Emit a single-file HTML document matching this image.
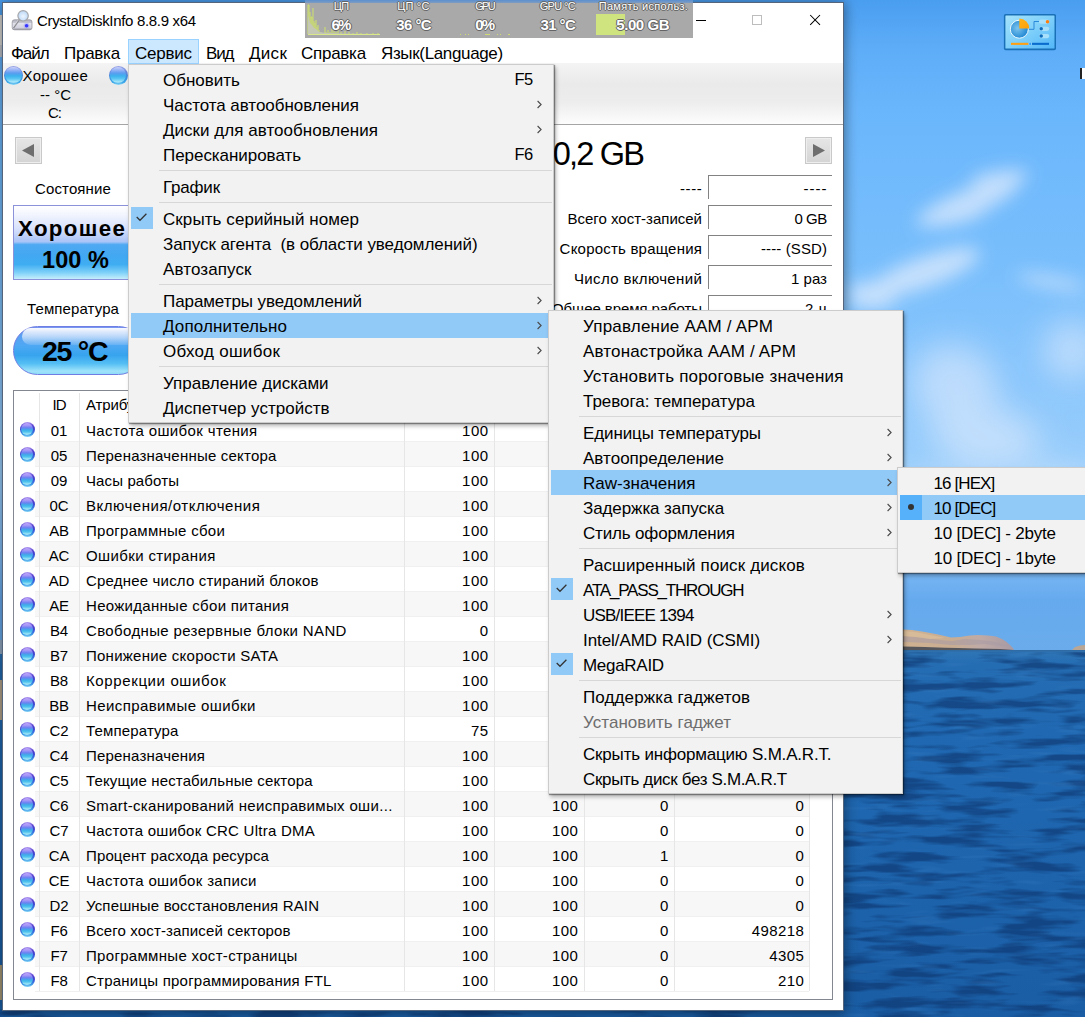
<!DOCTYPE html>
<html lang="ru">
<head>
<meta charset="utf-8">
<title>CrystalDiskInfo 8.8.9 x64</title>
<style>
*{box-sizing:border-box;margin:0;padding:0}
html,body{width:1085px;height:1017px;overflow:hidden;background:#1b5ba5}
body{font-family:"Liberation Sans",sans-serif;font-size:15px;color:#000;position:relative}
.a{position:absolute}
.t{position:absolute;white-space:pre}
#sky{left:0;top:0;width:1085px;height:651px;background:linear-gradient(180deg,#4a9ef0 0px,#5eadf8 50px,#6ab6fc 110px,#78befc 260px,#8ac6fc 380px,#9acefb 470px,#7fbbf6 560px,#66aaee 600px,#6aaceb 651px)}
#sea{left:0;top:650px;width:1085px;height:367px;background:linear-gradient(180deg,#3076b6 0px,#256db3 14px,#2069b2 80px,#1d64ad 220px,#1a5da4 367px)}
#win{left:2px;top:2px;width:842px;height:1009px;background:#fff;border:1px solid #55667c;box-shadow:0 1px 12px 1px rgba(0,0,0,.42)}
#diskbar{left:3px;top:63px;width:840px;height:62px;background:linear-gradient(180deg,#f4f4f4 0,#eaeaea 35%,#ededed 65%,#fdfdfd 100%);border-bottom:1px solid #a5a5a5}
#svc{left:128px;top:39px;width:71px;height:25px;background:#cce8ff;border:1px solid #99d1ff}
.orb{position:absolute;border-radius:50%}
.orbL{background:linear-gradient(180deg,#9aa4e6 0,#6a86d8 30%,#3f8fe0 60%,#3aa6e8 85%,#8ad6f6 100%)}
.orbL::after{content:'';position:absolute;left:1.2px;top:1.2px;right:1.2px;bottom:1.2px;border-radius:50%;background:linear-gradient(180deg,#ccd2fa 0,#9ab4f6 18%,#5c9cf0 38%,#3cb2ee 56%,#5cc6f2 74%,#a4e4f9 92%,#8fd8f6 100%)}
.orbS{background:linear-gradient(180deg,#b49af0 0,#5a44d0 22%,#4340cc 42%,#3c62dc 62%,#3a98e6 82%,#86d4f6 100%)}
.orbS::after{content:'';position:absolute;left:1.3px;top:1.3px;right:1.3px;bottom:1.3px;border-radius:50%;background:linear-gradient(180deg,#c0a8fa 0,#a596f7 20%,#6a82f2 40%,#3eaeea 58%,#50c4ee 74%,#a6e8f8 93%,#8edcf6 100%)}
.nav{position:absolute;width:27px;height:27px;background:linear-gradient(180deg,#e6e6e6,#d4d4d4);border:1px solid #c9c9c9;box-shadow:inset 0 0 0 1px #eee}
.fld{position:absolute;left:708px;width:124px;height:24px;border-top:1px solid #828282;border-left:1px solid #828282;background:#fff}
/* menus */
.menu{position:absolute;background:#f2f2f2;border:1px solid #ccc;box-shadow:1px 1px 1px rgba(0,0,0,.38),2px 3px 4px rgba(0,0,0,.28)}
.hl{position:absolute;background:#91c9f7;height:25px}
.sep{position:absolute;height:1px;background:#d7d7d7}
.chk{position:absolute;width:22px;height:25px;background:#56b0fa}
</style>
</head>
<body>
<div id="sky" class="a"></div>
<div id="sea" class="a"></div>
<svg class="a" style="left:0;top:0" width="1085" height="1017" viewBox="0 0 1085 1017">
<defs>
<filter id="bl" x="-30%" y="-60%" width="160%" height="220%"><feGaussianBlur stdDeviation="9"/></filter>
<filter id="bl2" x="-30%" y="-60%" width="160%" height="220%"><feGaussianBlur stdDeviation="16"/></filter>
<filter id="wv" x="0" y="0" width="100%" height="100%" color-interpolation-filters="sRGB"><feTurbulence type="fractalNoise" baseFrequency="0.016 0.11" numOctaves="3" seed="7" result="n"/><feColorMatrix in="n" type="matrix" values="0 0 0 0 0.05  0 0 0 0 0.2  0 0 0 0 0.42  0 0 0 -4 2.2"/></filter>
<filter id="wv2" x="0" y="0" width="100%" height="100%" color-interpolation-filters="sRGB"><feTurbulence type="fractalNoise" baseFrequency="0.02 0.16" numOctaves="2" seed="3" result="n"/><feColorMatrix in="n" type="matrix" values="0 0 0 0 0.35  0 0 0 0 0.6  0 0 0 0 0.85  0 0 0 2.6 -1.55"/></filter>
<linearGradient id="isl" x1="0" y1="0" x2="1" y2="0"><stop offset="0" stop-color="#d0b290"/><stop offset=".45" stop-color="#c9ad92"/><stop offset=".7" stop-color="#bfaaa6"/><stop offset="1" stop-color="#a79aa4"/></linearGradient>
</defs>
<g filter="url(#bl)" fill="#e8effd" opacity=".7">
<ellipse cx="968" cy="203" rx="55" ry="13" transform="rotate(-22 968 203)"/>
<ellipse cx="1000" cy="178" rx="30" ry="7" transform="rotate(-8 1000 178)"/>
<ellipse cx="925" cy="272" rx="58" ry="15" transform="rotate(-20 925 272)"/>
<ellipse cx="872" cy="298" rx="24" ry="11"/>
<ellipse cx="1052" cy="282" rx="36" ry="5" transform="rotate(10 1052 282)"/>
<ellipse cx="960" cy="215" rx="28" ry="8" transform="rotate(-15 960 215)"/>
<ellipse cx="870" cy="292" rx="22" ry="10"/>
</g>
<g filter="url(#bl2)" fill="#e6eefd" opacity=".55">
<ellipse cx="955" cy="385" rx="45" ry="40" transform="rotate(35 955 385)"/>
<ellipse cx="990" cy="440" rx="50" ry="30"/>
<ellipse cx="963" cy="428" rx="32" ry="28"/>
<ellipse cx="1072" cy="350" rx="30" ry="30"/>
<ellipse cx="930" cy="510" rx="70" ry="30"/>
<ellipse cx="1060" cy="500" rx="50" ry="30"/>
</g>
<rect x="843" y="652" width="242" height="365" filter="url(#wv)" opacity=".6"/>
<rect x="843" y="652" width="242" height="365" filter="url(#wv2)" opacity=".22"/>
<rect x="0" y="1009" width="845" height="8" filter="url(#wv)" opacity=".6"/>
<path d="M903 650 L903 629.5 L912 630 L925 632 L938 634.5 L951 637.5 L960 637 L970 635.5 L978 635 L988 635.5 L996 636.5 L1002 639 L1006 641.5 L1010 645 L1013 648 L1014 650 Z" fill="url(#isl)"/>
<path d="M903 636 L920 637 L940 640 L952 641 L965 639 L980 640 L990 641 L1000 643 L1008 646 L1000 646 L985 644 L970 645 L950 645 L930 643 L903 642 Z" fill="#a89aa6" opacity=".55"/>
<path d="M903 631 L915 632 L930 635 L945 638 L930 639 L915 637 L903 636 Z" fill="#dcc09c" opacity=".7"/>
<path d="M903 650 L903 646.5 L925 647 L945 647.8 L958 648 L975 648.6 L1000 649 L1014 650 Z" fill="#3f4652" opacity=".85"/>
<path d="M1072 650 L1075 647 L1080 645.5 L1085 645 L1085 650 Z" fill="#b9a694"/>
<rect x="843" y="650" width="242" height="1.5" fill="#2d5f92" opacity=".5"/>
</svg><div class="a" style="left:0;top:640px;width:3px;height:14px;background:#93aac2"></div><div class="a" style="left:0;top:680px;width:3px;height:40px;background:#b5a58c"></div><div class="a" style="left:0;top:965px;width:3px;height:35px;background:#a89a78"></div><div class="a" style="left:0;top:15px;width:3px;height:30px;background:#d8d6d2"></div><div class="a" style="left:0;top:45px;width:3px;height:12px;background:#bfc3c8"></div><svg class="a" style="left:1003px;top:13px" width="54" height="38" viewBox="0 0 54 38">
<defs><linearGradient id="cpg" x1="0" y1="0" x2="1" y2="1"><stop offset="0" stop-color="#a4e2fb"/><stop offset=".5" stop-color="#7fd0fa"/><stop offset="1" stop-color="#52b6f8"/></linearGradient>
<radialGradient id="cpp" cx=".4" cy=".45" r=".6"><stop offset="0" stop-color="#7cc4ee"/><stop offset="1" stop-color="#1f86d2"/></radialGradient>
<linearGradient id="cpo" x1="0" y1="0" x2="1" y2="1"><stop offset="0" stop-color="#ffb31a"/><stop offset="1" stop-color="#ff9f0a"/></linearGradient></defs>
<rect x=".9" y=".9" width="52.1" height="36.4" rx="1.8" fill="#1a70b6"/>
<rect x="2.4" y="2.4" width="49.1" height="33.2" rx=".6" fill="url(#cpg)"/>
<circle cx="16.3" cy="16.2" r="9" fill="url(#cpp)" stroke="#eefaff" stroke-width="1"/>
<path d="M16.3 15.6 L16.3 5.6 A10 10 0 0 1 26.3 15.6 Z" fill="url(#cpo)"/>
<path d="M26 16.3 H31 V8.5 H36" fill="none" stroke="#2a88d8" stroke-width="1"/>
<rect x="35.9" y="6.6" width="10.4" height="4.2" rx="2.1" fill="#a8e0fb"/><circle cx="44.5" cy="8.7" r="1.75" fill="#ff7e0c"/>
<rect x="35.9" y="13.7" width="10.4" height="4.2" rx="2.1" fill="#a8e0fb"/><circle cx="38.2" cy="15.8" r="1.75" fill="#0f6cbd"/>
<rect x="35.9" y="20.9" width="10.4" height="4.3" rx="2.1" fill="#a8e0fb"/><circle cx="38.2" cy="23" r="1.75" fill="#0f6cbd"/>
<rect x="8" y="29.8" width="17.6" height="2.1" fill="#ffa012"/><rect x="29" y="29.8" width="17" height="2.1" fill="#0a6ccc"/><rect x="25.9" y="29.3" width="2.6" height="3.1" rx=".8" fill="#2f9cf5" stroke="#bfe6fb" stroke-width=".5"/>
</svg><div class="a" style="left:1080px;top:68px;width:2px;height:11px;background:#222"></div><div class="a" style="left:1082px;top:68px;width:3px;height:11px;background:#fff"></div>
<div id="win" class="a"></div>
<div id="diskbar" class="a"></div>
<div id="svc" class="a"></div>
<svg class="a" style="left:10px;top:8px" width="24" height="24" viewBox="0 0 24 24">
<defs><linearGradient id="dg" x1="0" y1="0" x2="0" y2="1"><stop offset="0" stop-color="#b4b4be"/><stop offset=".3" stop-color="#c6c6d0"/><stop offset=".36" stop-color="#e2e2ec"/><stop offset=".8" stop-color="#d2d2de"/><stop offset="1" stop-color="#85858f"/></linearGradient>
<radialGradient id="mg" cx=".5" cy=".55" r=".6"><stop offset="0" stop-color="#edf5fe"/><stop offset="1" stop-color="#b5d4f6"/></radialGradient></defs>
<rect x="2.2" y="11.8" width="19.8" height="10" rx="2.2" fill="url(#dg)" stroke="#8e8e98" stroke-width=".7"/>
<circle cx="16.6" cy="17.8" r="3" fill="#8d8dff" opacity=".35"/><circle cx="16.6" cy="17.8" r="1.8" fill="#3737ff"/>
<path d="M8.6 12.6 L3.9 19.2" stroke="#8f8f96" stroke-width="1.7" stroke-linecap="round"/>
<path d="M7.9 12.4 L3.4 18.6" stroke="#f2f2f6" stroke-width=".7" stroke-linecap="round"/>
<circle cx="13.1" cy="7.8" r="5.2" fill="url(#mg)" stroke="#a6a6aa" stroke-width="1.2"/>
</svg><svg class="a" style="left:690px;top:8px" width="140" height="26" viewBox="0 0 140 26">
<path d="M6 12.5 H16" stroke="#000" stroke-width="1"/>
<rect x="62.5" y="7.5" width="9" height="9" fill="none" stroke="#bdbdbd" stroke-width="1"/>
<path d="M120.2 7 L130 16.8 M130 7 L120.2 16.8" stroke="#000" stroke-width="1.05"/>
</svg><div class="orb orbL" style="left:4px;top:65.5px;width:19px;height:19px"></div><div class="orb orbL" style="left:108.5px;top:65.5px;width:19px;height:19px"></div><div class="nav" style="left:15px;top:137px"></div><svg class="a" style="left:15px;top:137px" width="27" height="27"><path d="M19 7 L19 20 L7 13.5 Z" fill="#6e6e6e"/></svg><div class="nav" style="left:805px;top:137px"></div><svg class="a" style="left:805px;top:137px" width="27" height="27"><path d="M8 7 L8 20 L20 13.5 Z" fill="#6e6e6e"/></svg><div class="a" style="left:13px;top:205px;width:130px;height:75px;border:1px solid #8c92da;background:linear-gradient(180deg,#ffffff 0,#f2f5fe 12%,#d6e0fb 32%,#a9c4f7 49%,#4ea9f2 53%,#42a8f1 68%,#3fadf2 80%,#7dd0f8 91%,#c6eefc 100%)"></div><div class="a" style="left:13px;top:326px;width:130px;height:49px;border-radius:25px;border:1.5px solid #6f7ee2;background:linear-gradient(180deg,#7a96f2 0,#5f9df2 10%,#4ea8f3 40%,#37a3ee 60%,#55bff4 78%,#9fe3fa 94%,#8fdcf8 100%)"></div><div class="a" style="left:22px;top:328px;width:121px;height:17px;border-radius:12px 0 0 12px;background:linear-gradient(180deg,rgba(255,255,255,.95) 0,rgba(255,255,255,.55) 55%,rgba(255,255,255,.12) 100%)"></div><div class="fld" style="top:175px"></div><div class="fld" style="top:205px"></div><div class="fld" style="top:235px"></div><div class="fld" style="top:265px"></div><div class="fld" style="top:295px"></div>
<div class="t" style="top:11.0px;height:19px;line-height:19px;font-size:15px;left:37.0px;letter-spacing:-0.32px;">CrystalDiskInfo 8.8.9 x64</div>
<div class="t" style="top:43.0px;height:21px;line-height:21px;font-size:17px;left:11.0px;letter-spacing:-1.08px;">Файл</div>
<div class="t" style="top:43.0px;height:21px;line-height:21px;font-size:17px;left:64.0px;letter-spacing:-0.26px;">Правка</div>
<div class="t" style="top:43.0px;height:21px;line-height:21px;font-size:17px;left:135.0px;letter-spacing:-0.22px;">Сервис</div>
<div class="t" style="top:43.0px;height:21px;line-height:21px;font-size:17px;left:206.0px;letter-spacing:-1.11px;">Вид</div>
<div class="t" style="top:43.0px;height:21px;line-height:21px;font-size:17px;left:249.0px;letter-spacing:0.30px;">Диск</div>
<div class="t" style="top:43.0px;height:21px;line-height:21px;font-size:17px;left:301.0px;letter-spacing:-0.26px;">Справка</div>
<div class="t" style="top:43.0px;height:21px;line-height:21px;font-size:17px;left:381.0px;letter-spacing:-0.35px;">Язык(Language)</div>
<div class="t" style="top:66.0px;height:19px;line-height:19px;font-size:15px;left:22.5px;letter-spacing:0.29px;">Хорошее</div>
<div class="t" style="top:85.0px;height:19px;line-height:19px;font-size:15px;left:40.0px;">-- °C</div>
<div class="t" style="top:103.0px;height:19px;line-height:19px;font-size:15px;left:48.0px;letter-spacing:-1.00px;">C:</div>
<div class="t" style="top:179.0px;height:19px;line-height:19px;font-size:15px;left:35.0px;letter-spacing:0.13px;">Состояние</div>
<div class="t" style="top:215.0px;height:28px;line-height:28px;font-size:22.3px;left:18.0px;letter-spacing:1.33px;font-weight:bold;">Хорошее</div>
<div class="t" style="top:246.0px;height:29px;line-height:29px;font-size:23.5px;left:42.0px;letter-spacing:0.08px;font-weight:bold;">100 %</div>
<div class="t" style="top:299.0px;height:19px;line-height:19px;font-size:15px;left:27.0px;letter-spacing:0.11px;">Температура</div>
<div class="t" style="top:333.0px;height:36px;line-height:36px;font-size:28.5px;left:42.0px;letter-spacing:-1.25px;font-weight:bold;">25 °C</div>
<div class="t" style="top:134.0px;height:41px;line-height:41px;font-size:32.5px;left:552.7px;letter-spacing:-1.79px;">0,2 GB</div>
<div class="t" style="top:179.0px;height:19px;line-height:19px;font-size:15px;left:680.0px;letter-spacing:0.58px;">----</div>
<div class="t" style="top:179.0px;height:19px;line-height:19px;font-size:15px;left:803.6px;letter-spacing:0.98px;">----</div>
<div class="t" style="top:209.0px;height:19px;line-height:19px;font-size:15px;left:567.5px;">Всего хост-записей</div>
<div class="t" style="top:209.0px;height:19px;line-height:19px;font-size:15px;left:794.4px;letter-spacing:-0.45px;">0 GB</div>
<div class="t" style="top:239.0px;height:19px;line-height:19px;font-size:15px;left:559.6px;letter-spacing:0.21px;">Скорость вращения</div>
<div class="t" style="top:239.0px;height:19px;line-height:19px;font-size:15px;left:761.0px;letter-spacing:0.11px;">---- (SSD)</div>
<div class="t" style="top:269.0px;height:19px;line-height:19px;font-size:15px;left:574.0px;letter-spacing:0.35px;">Число включений</div>
<div class="t" style="top:269.0px;height:19px;line-height:19px;font-size:15px;left:791.0px;letter-spacing:0.02px;">1 раз</div>
<div class="t" style="top:299.0px;height:19px;line-height:19px;font-size:15px;left:552.0px;letter-spacing:-0.08px;">Общее время работы</div>
<div class="t" style="top:299.0px;height:19px;line-height:19px;font-size:15px;left:805.0px;letter-spacing:0.67px;">2 ч</div>
<div class="a" style="left:13px;top:390px;width:820px;height:610px;border:1px solid #828790;background:#fff"></div><div class="a" style="left:35px;top:441px;width:774px;height:1px;background:#f0f0f0"></div><div class="orb orbS" style="left:19.5px;top:421.5px;width:15px;height:15px"></div><div class="a" style="left:35px;top:442px;width:774px;height:25px;background:#f7f7f7"></div><div class="a" style="left:35px;top:466px;width:774px;height:1px;background:#f0f0f0"></div><div class="orb orbS" style="left:19.5px;top:446.5px;width:15px;height:15px"></div><div class="a" style="left:35px;top:491px;width:774px;height:1px;background:#f0f0f0"></div><div class="orb orbS" style="left:19.5px;top:471.5px;width:15px;height:15px"></div><div class="a" style="left:35px;top:492px;width:774px;height:25px;background:#f7f7f7"></div><div class="a" style="left:35px;top:516px;width:774px;height:1px;background:#f0f0f0"></div><div class="orb orbS" style="left:19.5px;top:496.5px;width:15px;height:15px"></div><div class="a" style="left:35px;top:541px;width:774px;height:1px;background:#f0f0f0"></div><div class="orb orbS" style="left:19.5px;top:521.5px;width:15px;height:15px"></div><div class="a" style="left:35px;top:542px;width:774px;height:25px;background:#f7f7f7"></div><div class="a" style="left:35px;top:566px;width:774px;height:1px;background:#f0f0f0"></div><div class="orb orbS" style="left:19.5px;top:546.5px;width:15px;height:15px"></div><div class="a" style="left:35px;top:591px;width:774px;height:1px;background:#f0f0f0"></div><div class="orb orbS" style="left:19.5px;top:571.5px;width:15px;height:15px"></div><div class="a" style="left:35px;top:592px;width:774px;height:25px;background:#f7f7f7"></div><div class="a" style="left:35px;top:616px;width:774px;height:1px;background:#f0f0f0"></div><div class="orb orbS" style="left:19.5px;top:596.5px;width:15px;height:15px"></div><div class="a" style="left:35px;top:641px;width:774px;height:1px;background:#f0f0f0"></div><div class="orb orbS" style="left:19.5px;top:621.5px;width:15px;height:15px"></div><div class="a" style="left:35px;top:642px;width:774px;height:25px;background:#f7f7f7"></div><div class="a" style="left:35px;top:666px;width:774px;height:1px;background:#f0f0f0"></div><div class="orb orbS" style="left:19.5px;top:646.5px;width:15px;height:15px"></div><div class="a" style="left:35px;top:691px;width:774px;height:1px;background:#f0f0f0"></div><div class="orb orbS" style="left:19.5px;top:671.5px;width:15px;height:15px"></div><div class="a" style="left:35px;top:692px;width:774px;height:25px;background:#f7f7f7"></div><div class="a" style="left:35px;top:716px;width:774px;height:1px;background:#f0f0f0"></div><div class="orb orbS" style="left:19.5px;top:696.5px;width:15px;height:15px"></div><div class="a" style="left:35px;top:741px;width:774px;height:1px;background:#f0f0f0"></div><div class="orb orbS" style="left:19.5px;top:721.5px;width:15px;height:15px"></div><div class="a" style="left:35px;top:742px;width:774px;height:25px;background:#f7f7f7"></div><div class="a" style="left:35px;top:766px;width:774px;height:1px;background:#f0f0f0"></div><div class="orb orbS" style="left:19.5px;top:746.5px;width:15px;height:15px"></div><div class="a" style="left:35px;top:791px;width:774px;height:1px;background:#f0f0f0"></div><div class="orb orbS" style="left:19.5px;top:771.5px;width:15px;height:15px"></div><div class="a" style="left:35px;top:792px;width:774px;height:25px;background:#f7f7f7"></div><div class="a" style="left:35px;top:816px;width:774px;height:1px;background:#f0f0f0"></div><div class="orb orbS" style="left:19.5px;top:796.5px;width:15px;height:15px"></div><div class="a" style="left:35px;top:841px;width:774px;height:1px;background:#f0f0f0"></div><div class="orb orbS" style="left:19.5px;top:821.5px;width:15px;height:15px"></div><div class="a" style="left:35px;top:842px;width:774px;height:25px;background:#f7f7f7"></div><div class="a" style="left:35px;top:866px;width:774px;height:1px;background:#f0f0f0"></div><div class="orb orbS" style="left:19.5px;top:846.5px;width:15px;height:15px"></div><div class="a" style="left:35px;top:891px;width:774px;height:1px;background:#f0f0f0"></div><div class="orb orbS" style="left:19.5px;top:871.5px;width:15px;height:15px"></div><div class="a" style="left:35px;top:892px;width:774px;height:25px;background:#f7f7f7"></div><div class="a" style="left:35px;top:916px;width:774px;height:1px;background:#f0f0f0"></div><div class="orb orbS" style="left:19.5px;top:896.5px;width:15px;height:15px"></div><div class="a" style="left:35px;top:941px;width:774px;height:1px;background:#f0f0f0"></div><div class="orb orbS" style="left:19.5px;top:921.5px;width:15px;height:15px"></div><div class="a" style="left:35px;top:942px;width:774px;height:25px;background:#f7f7f7"></div><div class="a" style="left:35px;top:966px;width:774px;height:1px;background:#f0f0f0"></div><div class="orb orbS" style="left:19.5px;top:946.5px;width:15px;height:15px"></div><div class="a" style="left:35px;top:991px;width:774px;height:1px;background:#f0f0f0"></div><div class="orb orbS" style="left:19.5px;top:971.5px;width:15px;height:15px"></div><div class="a" style="left:39px;top:393px;width:1px;height:598px;background:#e6e6e6"></div><div class="a" style="left:79px;top:393px;width:1px;height:598px;background:#e6e6e6"></div><div class="a" style="left:404px;top:393px;width:1px;height:598px;background:#e6e6e6"></div><div class="a" style="left:494px;top:393px;width:1px;height:598px;background:#e6e6e6"></div><div class="a" style="left:584px;top:393px;width:1px;height:598px;background:#e6e6e6"></div><div class="a" style="left:674px;top:393px;width:1px;height:598px;background:#e6e6e6"></div><div class="a" style="left:809px;top:393px;width:1px;height:598px;background:#e6e6e6"></div>
<div class="t" style="top:395.0px;height:19px;line-height:19px;font-size:15px;left:52.5px;letter-spacing:-1.00px;">ID</div>
<div class="t" style="top:395.0px;height:19px;line-height:19px;font-size:15px;left:86.0px;letter-spacing:-0.14px;">Атрибут</div>
<div class="t" style="top:421.0px;height:19px;line-height:19px;font-size:15px;letter-spacing:-0.20px;left:39px;width:40px;text-align:center;">01</div>
<div class="t" style="top:421.0px;height:19px;line-height:19px;font-size:15px;left:86.0px;letter-spacing:0.37px;">Частота ошибок чтения</div>
<div class="t" style="top:421.0px;height:19px;line-height:19px;font-size:15px;right:596.5px;letter-spacing:0.45px;">100</div>
<div class="t" style="top:446.0px;height:19px;line-height:19px;font-size:15px;letter-spacing:-0.20px;left:39px;width:40px;text-align:center;">05</div>
<div class="t" style="top:446.0px;height:19px;line-height:19px;font-size:15px;left:86.0px;letter-spacing:0.21px;">Переназначенные сектора</div>
<div class="t" style="top:446.0px;height:19px;line-height:19px;font-size:15px;right:596.5px;letter-spacing:0.45px;">100</div>
<div class="t" style="top:471.0px;height:19px;line-height:19px;font-size:15px;letter-spacing:-0.20px;left:39px;width:40px;text-align:center;">09</div>
<div class="t" style="top:471.0px;height:19px;line-height:19px;font-size:15px;left:86.0px;letter-spacing:0.12px;">Часы работы</div>
<div class="t" style="top:471.0px;height:19px;line-height:19px;font-size:15px;right:596.5px;letter-spacing:0.45px;">100</div>
<div class="t" style="top:496.0px;height:19px;line-height:19px;font-size:15px;letter-spacing:-0.20px;left:39px;width:40px;text-align:center;">0C</div>
<div class="t" style="top:496.0px;height:19px;line-height:19px;font-size:15px;left:86.0px;letter-spacing:0.53px;">Включения/отключения</div>
<div class="t" style="top:496.0px;height:19px;line-height:19px;font-size:15px;right:596.5px;letter-spacing:0.45px;">100</div>
<div class="t" style="top:521.0px;height:19px;line-height:19px;font-size:15px;letter-spacing:-0.20px;left:39px;width:40px;text-align:center;">AB</div>
<div class="t" style="top:521.0px;height:19px;line-height:19px;font-size:15px;left:86.0px;letter-spacing:0.28px;">Программные сбои</div>
<div class="t" style="top:521.0px;height:19px;line-height:19px;font-size:15px;right:596.5px;letter-spacing:0.45px;">100</div>
<div class="t" style="top:546.0px;height:19px;line-height:19px;font-size:15px;letter-spacing:-0.20px;left:39px;width:40px;text-align:center;">AC</div>
<div class="t" style="top:546.0px;height:19px;line-height:19px;font-size:15px;left:86.0px;letter-spacing:0.38px;">Ошибки стирания</div>
<div class="t" style="top:546.0px;height:19px;line-height:19px;font-size:15px;right:596.5px;letter-spacing:0.45px;">100</div>
<div class="t" style="top:571.0px;height:19px;line-height:19px;font-size:15px;letter-spacing:-0.20px;left:39px;width:40px;text-align:center;">AD</div>
<div class="t" style="top:571.0px;height:19px;line-height:19px;font-size:15px;left:86.0px;letter-spacing:0.19px;">Среднее число стираний блоков</div>
<div class="t" style="top:571.0px;height:19px;line-height:19px;font-size:15px;right:596.5px;letter-spacing:0.45px;">100</div>
<div class="t" style="top:596.0px;height:19px;line-height:19px;font-size:15px;letter-spacing:-0.20px;left:39px;width:40px;text-align:center;">AE</div>
<div class="t" style="top:596.0px;height:19px;line-height:19px;font-size:15px;left:86.0px;letter-spacing:0.30px;">Неожиданные сбои питания</div>
<div class="t" style="top:596.0px;height:19px;line-height:19px;font-size:15px;right:596.5px;letter-spacing:0.45px;">100</div>
<div class="t" style="top:621.0px;height:19px;line-height:19px;font-size:15px;letter-spacing:-0.20px;left:39px;width:40px;text-align:center;">B4</div>
<div class="t" style="top:621.0px;height:19px;line-height:19px;font-size:15px;left:86.0px;letter-spacing:0.36px;">Свободные резервные блоки NAND</div>
<div class="t" style="top:621.0px;height:19px;line-height:19px;font-size:15px;right:596.5px;letter-spacing:0.45px;">0</div>
<div class="t" style="top:646.0px;height:19px;line-height:19px;font-size:15px;letter-spacing:-0.20px;left:39px;width:40px;text-align:center;">B7</div>
<div class="t" style="top:646.0px;height:19px;line-height:19px;font-size:15px;left:86.0px;letter-spacing:0.25px;">Понижение скорости SATA</div>
<div class="t" style="top:646.0px;height:19px;line-height:19px;font-size:15px;right:596.5px;letter-spacing:0.45px;">100</div>
<div class="t" style="top:671.0px;height:19px;line-height:19px;font-size:15px;letter-spacing:-0.20px;left:39px;width:40px;text-align:center;">B8</div>
<div class="t" style="top:671.0px;height:19px;line-height:19px;font-size:15px;left:86.0px;letter-spacing:0.62px;">Коррекции ошибок</div>
<div class="t" style="top:671.0px;height:19px;line-height:19px;font-size:15px;right:596.5px;letter-spacing:0.45px;">100</div>
<div class="t" style="top:696.0px;height:19px;line-height:19px;font-size:15px;letter-spacing:-0.20px;left:39px;width:40px;text-align:center;">BB</div>
<div class="t" style="top:696.0px;height:19px;line-height:19px;font-size:15px;left:86.0px;letter-spacing:0.40px;">Неисправимые ошибки</div>
<div class="t" style="top:696.0px;height:19px;line-height:19px;font-size:15px;right:596.5px;letter-spacing:0.45px;">100</div>
<div class="t" style="top:721.0px;height:19px;line-height:19px;font-size:15px;letter-spacing:-0.20px;left:39px;width:40px;text-align:center;">C2</div>
<div class="t" style="top:721.0px;height:19px;line-height:19px;font-size:15px;left:86.0px;letter-spacing:0.16px;">Температура</div>
<div class="t" style="top:721.0px;height:19px;line-height:19px;font-size:15px;right:596.5px;letter-spacing:0.45px;">75</div>
<div class="t" style="top:746.0px;height:19px;line-height:19px;font-size:15px;letter-spacing:-0.20px;left:39px;width:40px;text-align:center;">C4</div>
<div class="t" style="top:746.0px;height:19px;line-height:19px;font-size:15px;left:86.0px;letter-spacing:0.19px;">Переназначения</div>
<div class="t" style="top:746.0px;height:19px;line-height:19px;font-size:15px;right:596.5px;letter-spacing:0.45px;">100</div>
<div class="t" style="top:771.0px;height:19px;line-height:19px;font-size:15px;letter-spacing:-0.20px;left:39px;width:40px;text-align:center;">C5</div>
<div class="t" style="top:771.0px;height:19px;line-height:19px;font-size:15px;left:86.0px;letter-spacing:0.14px;">Текущие нестабильные сектора</div>
<div class="t" style="top:771.0px;height:19px;line-height:19px;font-size:15px;right:596.5px;letter-spacing:0.45px;">100</div>
<div class="t" style="top:796.0px;height:19px;line-height:19px;font-size:15px;letter-spacing:-0.20px;left:39px;width:40px;text-align:center;">C6</div>
<div class="t" style="top:796.0px;height:19px;line-height:19px;font-size:15px;left:86.0px;letter-spacing:0.33px;">Smart-сканирований неисправимых оши...</div>
<div class="t" style="top:796.0px;height:19px;line-height:19px;font-size:15px;right:596.5px;letter-spacing:0.45px;">100</div>
<div class="t" style="top:796.0px;height:19px;line-height:19px;font-size:15px;right:506.6px;letter-spacing:0.45px;">100</div>
<div class="t" style="top:796.0px;height:19px;line-height:19px;font-size:15px;right:416.1px;letter-spacing:0.45px;">0</div>
<div class="t" style="top:796.0px;height:19px;line-height:19px;font-size:15px;right:280.6px;letter-spacing:0.45px;">0</div>
<div class="t" style="top:821.0px;height:19px;line-height:19px;font-size:15px;letter-spacing:-0.20px;left:39px;width:40px;text-align:center;">C7</div>
<div class="t" style="top:821.0px;height:19px;line-height:19px;font-size:15px;left:86.0px;letter-spacing:0.25px;">Частота ошибок CRC Ultra DMA</div>
<div class="t" style="top:821.0px;height:19px;line-height:19px;font-size:15px;right:596.5px;letter-spacing:0.45px;">100</div>
<div class="t" style="top:821.0px;height:19px;line-height:19px;font-size:15px;right:506.6px;letter-spacing:0.45px;">100</div>
<div class="t" style="top:821.0px;height:19px;line-height:19px;font-size:15px;right:416.1px;letter-spacing:0.45px;">0</div>
<div class="t" style="top:821.0px;height:19px;line-height:19px;font-size:15px;right:280.6px;letter-spacing:0.45px;">0</div>
<div class="t" style="top:846.0px;height:19px;line-height:19px;font-size:15px;letter-spacing:-0.20px;left:39px;width:40px;text-align:center;">CA</div>
<div class="t" style="top:846.0px;height:19px;line-height:19px;font-size:15px;left:86.0px;letter-spacing:0.13px;">Процент расхода ресурса</div>
<div class="t" style="top:846.0px;height:19px;line-height:19px;font-size:15px;right:596.5px;letter-spacing:0.45px;">100</div>
<div class="t" style="top:846.0px;height:19px;line-height:19px;font-size:15px;right:506.6px;letter-spacing:0.45px;">100</div>
<div class="t" style="top:846.0px;height:19px;line-height:19px;font-size:15px;right:416.1px;letter-spacing:0.45px;">1</div>
<div class="t" style="top:846.0px;height:19px;line-height:19px;font-size:15px;right:280.6px;letter-spacing:0.45px;">0</div>
<div class="t" style="top:871.0px;height:19px;line-height:19px;font-size:15px;letter-spacing:-0.20px;left:39px;width:40px;text-align:center;">CE</div>
<div class="t" style="top:871.0px;height:19px;line-height:19px;font-size:15px;left:86.0px;letter-spacing:0.33px;">Частота ошибок записи</div>
<div class="t" style="top:871.0px;height:19px;line-height:19px;font-size:15px;right:596.5px;letter-spacing:0.45px;">100</div>
<div class="t" style="top:871.0px;height:19px;line-height:19px;font-size:15px;right:506.6px;letter-spacing:0.45px;">100</div>
<div class="t" style="top:871.0px;height:19px;line-height:19px;font-size:15px;right:416.1px;letter-spacing:0.45px;">0</div>
<div class="t" style="top:871.0px;height:19px;line-height:19px;font-size:15px;right:280.6px;letter-spacing:0.45px;">0</div>
<div class="t" style="top:896.0px;height:19px;line-height:19px;font-size:15px;letter-spacing:-0.20px;left:39px;width:40px;text-align:center;">D2</div>
<div class="t" style="top:896.0px;height:19px;line-height:19px;font-size:15px;left:86.0px;letter-spacing:0.17px;">Успешные восстановления RAIN</div>
<div class="t" style="top:896.0px;height:19px;line-height:19px;font-size:15px;right:596.5px;letter-spacing:0.45px;">100</div>
<div class="t" style="top:896.0px;height:19px;line-height:19px;font-size:15px;right:506.6px;letter-spacing:0.45px;">100</div>
<div class="t" style="top:896.0px;height:19px;line-height:19px;font-size:15px;right:416.1px;letter-spacing:0.45px;">0</div>
<div class="t" style="top:896.0px;height:19px;line-height:19px;font-size:15px;right:280.6px;letter-spacing:0.45px;">0</div>
<div class="t" style="top:921.0px;height:19px;line-height:19px;font-size:15px;letter-spacing:-0.20px;left:39px;width:40px;text-align:center;">F6</div>
<div class="t" style="top:921.0px;height:19px;line-height:19px;font-size:15px;left:86.0px;letter-spacing:0.14px;">Всего хост-записей секторов</div>
<div class="t" style="top:921.0px;height:19px;line-height:19px;font-size:15px;right:596.5px;letter-spacing:0.45px;">100</div>
<div class="t" style="top:921.0px;height:19px;line-height:19px;font-size:15px;right:506.6px;letter-spacing:0.45px;">100</div>
<div class="t" style="top:921.0px;height:19px;line-height:19px;font-size:15px;right:416.1px;letter-spacing:0.45px;">0</div>
<div class="t" style="top:921.0px;height:19px;line-height:19px;font-size:15px;right:280.6px;letter-spacing:0.45px;">498218</div>
<div class="t" style="top:946.0px;height:19px;line-height:19px;font-size:15px;letter-spacing:-0.20px;left:39px;width:40px;text-align:center;">F7</div>
<div class="t" style="top:946.0px;height:19px;line-height:19px;font-size:15px;left:86.0px;letter-spacing:0.31px;">Программные хост-страницы</div>
<div class="t" style="top:946.0px;height:19px;line-height:19px;font-size:15px;right:596.5px;letter-spacing:0.45px;">100</div>
<div class="t" style="top:946.0px;height:19px;line-height:19px;font-size:15px;right:506.6px;letter-spacing:0.45px;">100</div>
<div class="t" style="top:946.0px;height:19px;line-height:19px;font-size:15px;right:416.1px;letter-spacing:0.45px;">0</div>
<div class="t" style="top:946.0px;height:19px;line-height:19px;font-size:15px;right:280.6px;letter-spacing:0.45px;">4305</div>
<div class="t" style="top:971.0px;height:19px;line-height:19px;font-size:15px;letter-spacing:-0.20px;left:39px;width:40px;text-align:center;">F8</div>
<div class="t" style="top:971.0px;height:19px;line-height:19px;font-size:15px;left:86.0px;letter-spacing:0.23px;">Страницы программирования FTL</div>
<div class="t" style="top:971.0px;height:19px;line-height:19px;font-size:15px;right:596.5px;letter-spacing:0.45px;">100</div>
<div class="t" style="top:971.0px;height:19px;line-height:19px;font-size:15px;right:506.6px;letter-spacing:0.45px;">100</div>
<div class="t" style="top:971.0px;height:19px;line-height:19px;font-size:15px;right:416.1px;letter-spacing:0.45px;">0</div>
<div class="t" style="top:971.0px;height:19px;line-height:19px;font-size:15px;right:280.6px;letter-spacing:0.45px;">210</div>
<div class="a" style="left:305px;top:0;width:388px;height:37.5px;background:#a9a9a9"></div><div class="a" style="left:305px;top:0;width:388px;height:3px;background:linear-gradient(180deg,#5b8fd0,#7f9cc0)"></div><div class="a" style="left:596px;top:14px;width:29px;height:21px;background:#cfe37f"></div><svg class="a" style="left:307px;top:3px" width="75" height="32" viewBox="0 0 75 32">
<path d="M1 31 V2 H2 V31 M3 31 V9 M4 31 V14 H5 V31 M6 31 V5 M7 31 V18 M8 31 V20 M9 31 V17 M10 31 V24 M11 31 V22 M12 31 V27 M14 31 V29 M16 31 V30 M18 31 V24 M19 31 V29 M21 31 V27 M23 31 V29 M25 31 V26 M27 31 V28 M29 31 V29 M31 31 V27 M34 31 V29 M38 31 V28 M42 31 V29 M46 31 V30 M50 31 V29 M54 31 V30 M60 31 V30 M66 31 V30 M71 31 V30" stroke="#cfe36a" stroke-width="1" fill="none"/>
<path d="M1 31 L1 12 L3 20 L5 22 L7 25 L9 26 L12 29 L20 30 L40 30.5 L72 31 Z" fill="#c4c4c4" opacity=".8"/>
<path d="M1 31.5 H73" stroke="#d9e98a" stroke-width="1"/>
</svg><div class="a" style="left:460px;top:34px;width:52px;height:1px;background:linear-gradient(90deg,#d6e36a 0 1px,transparent 1px 5px,#d6e36a 5px 6px,transparent 6px 8px,#d6e36a 8px 9px,transparent 9px 25px,#d6e36a 25px 30px,transparent 30px 37px,#d6e36a 37px 38px,transparent 38px 40px,#d6e36a 40px 41px,transparent 41px 48px,#d6e36a 48px 50px,transparent 50px);opacity:.85"></div>
<div class="t" style="top:-1.0px;height:14px;line-height:14px;font-size:11px;left:333.8px;letter-spacing:-0.70px;color:#fff;text-shadow:0 0 1px #5a5a5a,1px 0 0 #666,-1px 0 0 #666,0 1px 0 #666,0 -1px 0 #666;">ЦП</div>
<div class="t" style="top:15.0px;height:19px;line-height:19px;font-size:15px;left:331.4px;letter-spacing:-1.66px;font-weight:bold;color:#fff;text-shadow:0 0 1px #5a5a5a,1px 0 0 #666,-1px 0 0 #666,0 1px 0 #666,0 -1px 0 #666;">6%</div>
<div class="t" style="top:-1.0px;height:14px;line-height:14px;font-size:11px;left:397.2px;letter-spacing:0.19px;color:#fff;text-shadow:0 0 1px #5a5a5a,1px 0 0 #666,-1px 0 0 #666,0 1px 0 #666,0 -1px 0 #666;">ЦП °C</div>
<div class="t" style="top:15.0px;height:19px;line-height:19px;font-size:15px;left:396.3px;letter-spacing:-0.58px;font-weight:bold;color:#fff;text-shadow:0 0 1px #5a5a5a,1px 0 0 #666,-1px 0 0 #666,0 1px 0 #666,0 -1px 0 #666;">36 °C</div>
<div class="t" style="top:-1.0px;height:14px;line-height:14px;font-size:11px;left:475.2px;letter-spacing:-1.70px;color:#fff;text-shadow:0 0 1px #5a5a5a,1px 0 0 #666,-1px 0 0 #666,0 1px 0 #666,0 -1px 0 #666;">GPU</div>
<div class="t" style="top:15.0px;height:19px;line-height:19px;font-size:15px;left:475.2px;letter-spacing:-1.66px;font-weight:bold;color:#fff;text-shadow:0 0 1px #5a5a5a,1px 0 0 #666,-1px 0 0 #666,0 1px 0 #666,0 -1px 0 #666;">0%</div>
<div class="t" style="top:-1.0px;height:14px;line-height:14px;font-size:11px;left:539.7px;letter-spacing:-0.63px;color:#fff;text-shadow:0 0 1px #5a5a5a,1px 0 0 #666,-1px 0 0 #666,0 1px 0 #666,0 -1px 0 #666;">GPU °C</div>
<div class="t" style="top:15.0px;height:19px;line-height:19px;font-size:15px;left:540.6px;letter-spacing:-0.62px;font-weight:bold;color:#fff;text-shadow:0 0 1px #5a5a5a,1px 0 0 #666,-1px 0 0 #666,0 1px 0 #666,0 -1px 0 #666;">31 °C</div>
<div class="t" style="top:-1.0px;height:14px;line-height:14px;font-size:11px;left:598.7px;letter-spacing:0.29px;color:#fff;text-shadow:0 0 1px #5a5a5a,1px 0 0 #666,-1px 0 0 #666,0 1px 0 #666,0 -1px 0 #666;">Память использ.</div>
<div class="t" style="top:15.0px;height:19px;line-height:19px;font-size:15px;left:616.2px;letter-spacing:-0.40px;font-weight:bold;color:#fff;text-shadow:0 0 1px #5a5a5a,1px 0 0 #666,-1px 0 0 #666,0 1px 0 #666,0 -1px 0 #666;">5.00 GB</div>
<div class="menu" style="left:128px;top:64px;width:426px;height:359px"></div><svg class="a" style="left:535px;top:99px" width="8" height="11" viewBox="0 0 8 11"><path d="M2.6 2 L6.1 5.5 L2.6 9" fill="none" stroke="#4a4a4a" stroke-width="1.1"/></svg><svg class="a" style="left:535px;top:124px" width="8" height="11" viewBox="0 0 8 11"><path d="M2.6 2 L6.1 5.5 L2.6 9" fill="none" stroke="#4a4a4a" stroke-width="1.1"/></svg><div class="sep" style="left:159px;top:170px;width:393px"></div><div class="sep" style="left:159px;top:202px;width:393px"></div><div class="a" style="left:131px;top:207px;width:22px;height:22px;background:#91c9f7"></div><svg class="a" style="left:136.4px;top:213.3px" width="12" height="10" viewBox="0 0 12 10"><path d="M.7 4 L4 7.3 L10.4 .8" fill="none" stroke="#333" stroke-width="1.25"/></svg><div class="sep" style="left:159px;top:284px;width:393px"></div><svg class="a" style="left:535px;top:295px" width="8" height="11" viewBox="0 0 8 11"><path d="M2.6 2 L6.1 5.5 L2.6 9" fill="none" stroke="#4a4a4a" stroke-width="1.1"/></svg><div class="hl" style="left:131px;top:313px;width:420px"></div><svg class="a" style="left:535px;top:320px" width="8" height="11" viewBox="0 0 8 11"><path d="M2.6 2 L6.1 5.5 L2.6 9" fill="none" stroke="#4a4a4a" stroke-width="1.1"/></svg><svg class="a" style="left:535px;top:345px" width="8" height="11" viewBox="0 0 8 11"><path d="M2.6 2 L6.1 5.5 L2.6 9" fill="none" stroke="#4a4a4a" stroke-width="1.1"/></svg><div class="sep" style="left:159px;top:366px;width:393px"></div><div class="menu" style="left:548px;top:310px;width:355px;height:484px"></div><div class="sep" style="left:579px;top:416px;width:322px"></div><svg class="a" style="left:885px;top:427px" width="8" height="11" viewBox="0 0 8 11"><path d="M2.6 2 L6.1 5.5 L2.6 9" fill="none" stroke="#4a4a4a" stroke-width="1.1"/></svg><svg class="a" style="left:885px;top:452px" width="8" height="11" viewBox="0 0 8 11"><path d="M2.6 2 L6.1 5.5 L2.6 9" fill="none" stroke="#4a4a4a" stroke-width="1.1"/></svg><div class="hl" style="left:551px;top:470px;width:349px"></div><svg class="a" style="left:885px;top:477px" width="8" height="11" viewBox="0 0 8 11"><path d="M2.6 2 L6.1 5.5 L2.6 9" fill="none" stroke="#4a4a4a" stroke-width="1.1"/></svg><svg class="a" style="left:885px;top:502px" width="8" height="11" viewBox="0 0 8 11"><path d="M2.6 2 L6.1 5.5 L2.6 9" fill="none" stroke="#4a4a4a" stroke-width="1.1"/></svg><svg class="a" style="left:885px;top:527px" width="8" height="11" viewBox="0 0 8 11"><path d="M2.6 2 L6.1 5.5 L2.6 9" fill="none" stroke="#4a4a4a" stroke-width="1.1"/></svg><div class="sep" style="left:579px;top:548px;width:322px"></div><div class="a" style="left:551px;top:578px;width:22px;height:22px;background:#91c9f7"></div><svg class="a" style="left:556.4px;top:584.3px" width="12" height="10" viewBox="0 0 12 10"><path d="M.7 4 L4 7.3 L10.4 .8" fill="none" stroke="#333" stroke-width="1.25"/></svg><svg class="a" style="left:885px;top:609px" width="8" height="11" viewBox="0 0 8 11"><path d="M2.6 2 L6.1 5.5 L2.6 9" fill="none" stroke="#4a4a4a" stroke-width="1.1"/></svg><svg class="a" style="left:885px;top:634px" width="8" height="11" viewBox="0 0 8 11"><path d="M2.6 2 L6.1 5.5 L2.6 9" fill="none" stroke="#4a4a4a" stroke-width="1.1"/></svg><div class="a" style="left:551px;top:653px;width:22px;height:22px;background:#91c9f7"></div><svg class="a" style="left:556.4px;top:659.3px" width="12" height="10" viewBox="0 0 12 10"><path d="M.7 4 L4 7.3 L10.4 .8" fill="none" stroke="#333" stroke-width="1.25"/></svg><div class="sep" style="left:579px;top:680px;width:322px"></div><div class="sep" style="left:579px;top:737px;width:322px"></div><div class="menu" style="left:897px;top:467px;width:200px;height:106px"></div><div class="hl" style="left:900px;top:495px;width:194px"></div><div class="chk" style="left:900px;top:495px"></div><div class="a" style="left:908px;top:503.7px;width:6px;height:6px;border-radius:50%;background:#333"></div>
<div class="t" style="top:70.0px;height:21px;line-height:21px;font-size:17px;left:163.0px;">Обновить</div>
<div class="t" style="top:69.0px;height:21px;line-height:21px;font-size:16.5px;left:514.5px;letter-spacing:-0.51px;">F5</div>
<div class="t" style="top:95.0px;height:21px;line-height:21px;font-size:17px;left:163.0px;letter-spacing:-0.05px;">Частота автообновления</div>
<div class="t" style="top:120.0px;height:21px;line-height:21px;font-size:17px;left:163.0px;letter-spacing:0.03px;">Диски для автообновления</div>
<div class="t" style="top:145.0px;height:21px;line-height:21px;font-size:17px;left:163.0px;letter-spacing:-0.05px;">Пересканировать</div>
<div class="t" style="top:144.0px;height:21px;line-height:21px;font-size:16.5px;left:514.5px;letter-spacing:-0.51px;">F6</div>
<div class="t" style="top:177.0px;height:21px;line-height:21px;font-size:17px;left:163.0px;letter-spacing:-0.20px;">График</div>
<div class="t" style="top:209.0px;height:21px;line-height:21px;font-size:17px;left:163.0px;letter-spacing:0.08px;">Скрыть серийный номер</div>
<div class="t" style="top:234.0px;height:21px;line-height:21px;font-size:17px;left:163.0px;letter-spacing:-0.07px;">Запуск агента  (в области уведомлений)</div>
<div class="t" style="top:259.0px;height:21px;line-height:21px;font-size:17px;left:163.0px;letter-spacing:0.10px;">Автозапуск</div>
<div class="t" style="top:291.0px;height:21px;line-height:21px;font-size:17px;left:163.0px;letter-spacing:-0.08px;">Параметры уведомлений</div>
<div class="t" style="top:316.0px;height:21px;line-height:21px;font-size:17px;left:163.0px;letter-spacing:0.13px;">Дополнительно</div>
<div class="t" style="top:341.0px;height:21px;line-height:21px;font-size:17px;left:163.0px;letter-spacing:0.29px;">Обход ошибок</div>
<div class="t" style="top:373.0px;height:21px;line-height:21px;font-size:17px;left:163.0px;">Управление дисками</div>
<div class="t" style="top:398.0px;height:21px;line-height:21px;font-size:17px;left:163.0px;letter-spacing:0.02px;">Диспетчер устройств</div>
<div class="t" style="top:316.0px;height:21px;line-height:21px;font-size:17px;left:583.0px;letter-spacing:0.20px;">Управление AAM / APM</div>
<div class="t" style="top:341.0px;height:21px;line-height:21px;font-size:17px;left:583.0px;letter-spacing:0.16px;">Автонастройка AAM / APM</div>
<div class="t" style="top:366.0px;height:21px;line-height:21px;font-size:17px;left:583.0px;letter-spacing:0.20px;">Установить пороговые значения</div>
<div class="t" style="top:391.0px;height:21px;line-height:21px;font-size:17px;left:583.0px;letter-spacing:-0.03px;">Тревога: температура</div>
<div class="t" style="top:423.0px;height:21px;line-height:21px;font-size:17px;left:583.0px;letter-spacing:-0.12px;">Единицы температуры</div>
<div class="t" style="top:448.0px;height:21px;line-height:21px;font-size:17px;left:583.0px;letter-spacing:0.02px;">Автоопределение</div>
<div class="t" style="top:473.0px;height:21px;line-height:21px;font-size:17px;left:583.0px;letter-spacing:0.01px;">Raw-значения</div>
<div class="t" style="top:498.0px;height:21px;line-height:21px;font-size:17px;left:583.0px;letter-spacing:-0.09px;">Задержка запуска</div>
<div class="t" style="top:523.0px;height:21px;line-height:21px;font-size:17px;left:583.0px;letter-spacing:-0.17px;">Стиль оформления</div>
<div class="t" style="top:555.0px;height:21px;line-height:21px;font-size:17px;left:583.0px;letter-spacing:0.13px;">Расширенный поиск дисков</div>
<div class="t" style="top:580.0px;height:21px;line-height:21px;font-size:17px;left:583.0px;letter-spacing:-1.19px;">ATA_PASS_THROUGH</div>
<div class="t" style="top:605.0px;height:21px;line-height:21px;font-size:17px;left:583.0px;letter-spacing:-0.80px;">USB/IEEE 1394</div>
<div class="t" style="top:630.0px;height:21px;line-height:21px;font-size:17px;left:583.0px;letter-spacing:-0.07px;">Intel/AMD RAID (CSMI)</div>
<div class="t" style="top:655.0px;height:21px;line-height:21px;font-size:17px;left:583.0px;letter-spacing:-0.29px;">MegaRAID</div>
<div class="t" style="top:687.0px;height:21px;line-height:21px;font-size:17px;left:583.0px;letter-spacing:0.12px;">Поддержка гаджетов</div>
<div class="t" style="top:712.0px;height:21px;line-height:21px;font-size:17px;left:583.0px;letter-spacing:0.05px;color:#6d6d6d;">Установить гаджет</div>
<div class="t" style="top:744.0px;height:21px;line-height:21px;font-size:17px;left:583.0px;letter-spacing:-0.19px;">Скрыть информацию S.M.A.R.T.</div>
<div class="t" style="top:769.0px;height:21px;line-height:21px;font-size:17px;left:583.0px;letter-spacing:-0.34px;">Скрыть диск без S.M.A.R.T</div>
<div class="t" style="top:473.0px;height:21px;line-height:21px;font-size:17px;left:933.5px;letter-spacing:-0.90px;">16 [HEX]</div>
<div class="t" style="top:498.0px;height:21px;line-height:21px;font-size:17px;left:933.5px;letter-spacing:-0.89px;">10 [DEC]</div>
<div class="t" style="top:523.0px;height:21px;line-height:21px;font-size:17px;left:933.5px;letter-spacing:-0.22px;">10 [DEC] - 2byte</div>
<div class="t" style="top:548.0px;height:21px;line-height:21px;font-size:17px;left:933.5px;letter-spacing:-0.22px;">10 [DEC] - 1byte</div>
</body>
</html>
